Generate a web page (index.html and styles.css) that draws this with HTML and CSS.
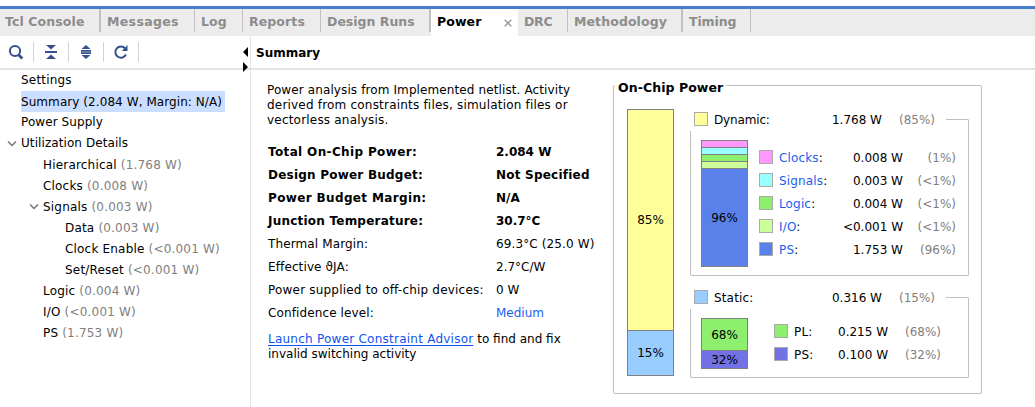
FILE: index.html
```html
<!DOCTYPE html>
<html lang="en">
<head>
<meta charset="utf-8">
<title>Power</title>
<link rel="stylesheet" href="styles.css">
</head>
<body>
<nav class="tabs">
  <div class="tab t-tcl thick"><span>Tcl Console</span></div>
  <div class="tab t-msg"><span>Messages</span></div>
  <div class="tab t-log"><span>Log</span></div>
  <div class="tab t-rep"><span>Reports</span></div>
  <div class="tab t-runs thick"><span>Design Runs</span></div>
  <div class="tab t-power active"><span>Power</span><svg class="close" width="8" height="8" viewBox="0 0 8 8"><path d="M.7.7l6.6 6.6M7.3.7L.7 7.3"/></svg></div>
  <div class="tab t-drc"><span>DRC</span></div>
  <div class="tab t-meth thick"><span>Methodology</span></div>
  <div class="tab t-time"><span>Timing</span></div>
</nav>
<main class="main">
  <aside class="side">
    <div class="toolbar">
      <div class="tool"><svg width="16" height="16" viewBox="0 0 16 16"><circle cx="7" cy="7" r="5.1" fill="none" stroke="#35508a" stroke-width="2"/><path d="M10.5 10.8l3.800 3.600" stroke="#35508a" stroke-width="2.8"/></svg></div>
      <div class="tool"><svg width="16" height="16" viewBox="0 0 16 16" fill="#35508a"><path d="M3 1h10L8 5.500zM2 7h12v2H2zM8 10.500l5 4.500H3z"/></svg></div>
      <div class="tool"><svg width="16" height="16" viewBox="0 0 16 16" fill="#35508a"><path d="M8 1l4.500 4h-9zM3 6h10v1.700H3zM3 8.300h10V10H3zM3.500 11h9L8 15z"/></svg></div>
      <div class="tool"><svg width="16" height="16" viewBox="0 0 16 16"><path d="M13 10.500A5.600 5.600 0 1 1 12.200 4.400" fill="none" stroke="#35508a" stroke-width="2"/><path d="M14.500 1v6H8.800z" fill="#35508a"/></svg></div>
      <div class="collapse"><svg width="6" height="26" viewBox="0 0 6 26"><path d="M5 0v10L0 5zM0 15v10l5-5z"/></svg></div>
    </div>
    <ul class="tree">
      <li class="raised">Settings</li>
      <li><span class="selected">Summary (2.084 W, Margin: N/A)</span></li>
      <li class="branch">Power Supply</li>
      <li class="branch"><svg class="chev" width="10" height="6" viewBox="0 0 10 6"><path d="M1 .5l4 4 4-4"/></svg>Utilization Details</li>
      <li class="l2">Hierarchical <i>(1.768 W)</i></li>
      <li class="l2">Clocks <i>(0.008 W)</i></li>
      <li class="l2"><svg class="chev up" width="10" height="6" viewBox="0 0 10 6"><path d="M1 .5l4 4 4-4"/></svg>Signals <i>(0.003 W)</i></li>
      <li class="l3">Data <i>(0.003 W)</i></li>
      <li class="l3">Clock Enable <i>(&lt;0.001 W)</i></li>
      <li class="l3">Set/Reset <i>(&lt;0.001 W)</i></li>
      <li class="l2">Logic <i>(0.004 W)</i></li>
      <li class="l2">I/O <i>(&lt;0.001 W)</i></li>
      <li class="l2">PS <i>(1.753 W)</i></li>
    </ul>
  </aside>
  <section class="content">
    <h1 class="heading">Summary</h1>
    <div class="columns">
      <div class="report">
        <p class="intro">Power analysis from Implemented netlist. Activity<br><span class="wide">derived from constraints files, simulation files or</span><br><span class="wide">vectorless analysis.</span></p>
        <dl class="facts">
          <dt class="b loose">Total On-Chip Power:</dt><dd class="b tight">2.084 W</dd>
          <dt class="b">Design Power Budget:</dt><dd class="b">Not Specified</dd>
          <dt class="b loose">Power Budget Margin:</dt><dd class="b tight">N/A</dd>
          <dt class="b">Junction Temperature:</dt><dd class="b tight">30.7°C</dd>
          <dt>Thermal Margin:</dt><dd>69.3°C (25.0 W)</dd>
          <dt>Effective ϑJA:</dt><dd class="tight">2.7°C/W</dd>
          <dt class="wide">Power supplied to off-chip devices:</dt><dd class="tight">0 W</dd>
          <dt>Confidence level:</dt><dd class="blue tight">Medium</dd>
        </dl>
        <p class="advice"><a href="#">Launch Power Constraint Advisor</a><span class="tail"> to find and fix<br>invalid switching activity</span></p>
      </div>
      <div class="chip">
        <h2 class="chip-title">On-Chip Power</h2>
        <div class="bar total"><div class="yellow">85%</div><div class="sky">15%</div></div>
        <div class="groups">
          <div class="group dynamic">
            <div class="group-head"><b class="swatch yellow"></b><span class="name tight-name">Dynamic:</span><span class="val">1.768 W</span><span class="pct">(85%)</span><b class="corner"></b></div>
            <div class="group-body">
              <div class="bar dyn"><div class="pink"></div><div class="cyan"></div><div class="green"></div><div class="lime"></div><div class="royal">96%</div></div>
              <div class="legend">
                <div class="item"><b class="swatch pink"></b><span class="name"><em>Clocks</em>:</span><span class="val">0.008 W</span><span class="pct">(1%)</span></div>
                <div class="item"><b class="swatch cyan"></b><span class="name"><em>Signals</em>:</span><span class="val">0.003 W</span><span class="pct">(&lt;1%)</span></div>
                <div class="item"><b class="swatch green"></b><span class="name"><em>Logic</em>:</span><span class="val">0.004 W</span><span class="pct">(&lt;1%)</span></div>
                <div class="item"><b class="swatch lime"></b><span class="name"><em>I/O</em>:</span><span class="val">&lt;0.001 W</span><span class="pct">(&lt;1%)</span></div>
                <div class="item"><b class="swatch royal"></b><span class="name"><em>PS</em>:</span><span class="val">1.753 W</span><span class="pct">(96%)</span></div>
              </div>
            </div>
          </div>
          <div class="group static">
            <div class="group-head"><b class="swatch sky"></b><span class="name">Static:</span><span class="val">0.316 W</span><span class="pct">(15%)</span><b class="corner"></b></div>
            <div class="group-body">
              <div class="bar stat"><div class="green">68%</div><div class="violet">32%</div></div>
              <div class="legend">
                <div class="item"><b class="swatch green"></b><span class="name">PL:</span><span class="val">0.215 W</span><span class="pct">(68%)</span></div>
                <div class="item"><b class="swatch violet"></b><span class="name">PS:</span><span class="val">0.100 W</span><span class="pct">(32%)</span></div>
              </div>
            </div>
          </div>
        </div>
      </div>
    </div>
  </section>
</main>
</body>
</html>
```
FILE: styles.css
```css
* { box-sizing: border-box; margin: 0; padding: 0; }
body { width: 1035px; height: 407px; overflow: hidden; background: #fff; color: #000; font: 12px/15px "DejaVu Sans", sans-serif; display: flex; flex-direction: column; padding-top: 6px; white-space: nowrap; }
svg { display: block; flex: none; }

.tabs { display: flex; height: 30px; border-top: 3px solid #477bcd; background: #ececec; flex: none; }
.tab { height: 23px; border-right: 1px solid #c0c0c0; padding: 5px 0 0 6px; font-weight: bold; color: #8c8c8c; flex: none; font-size: 12.500px; letter-spacing: .1px; }
.thick { border-right-width: 2px; }
.t-tcl { width: 101px; padding-left: 5px; }
.t-msg { width: 94px; letter-spacing: .35px; }
.t-log { width: 48px; }
.t-rep { width: 78px; }
.t-runs { width: 110px; letter-spacing: 0; }
.t-power { width: 87px; }
.t-drc { width: 50px; letter-spacing: -.3px; }
.t-meth { width: 115px; }
.t-time { width: 68px; letter-spacing: -.1px; }
.active { display: flex; height: 27px; border: 0; background: #fff; color: #000; }
.close { margin: 5px 0 0 auto; margin-right: 6px; stroke: #999; stroke-width: 1.400; }

.main { display: flex; flex: 1; }
.side { width: 251px; border-right: 1px solid #e4e4e4; flex: none; }
.toolbar { display: flex; height: 34px; border-bottom: 2px solid #e4e4e4; padding-top: 6px; }
.tool { width: 35px; height: 20px; border-right: 1px solid #d4d4d4; padding: 2px 0 0 9px; }
.tool:first-child { width: 34px; padding-left: 8px; }
.collapse { margin: 5px 0 0 auto; margin-right: 1px; height: 26px; }
.tree { list-style: none; letter-spacing: .19px; }
.tree li { display: flex; align-items: center; height: 21px; padding: 1px 0 0 21px; white-space: pre; }
.tree .raised, .tree .branch { padding: 0 0 1px 21px; }
.tree .branch { letter-spacing: .08px; }
.tree .l2 { padding-left: 43px; }
.tree .l3 { padding-left: 65px; }
.tree i { font-style: normal; color: #808080; }
.chev { margin: 1px 4px 0 -14px; fill: none; stroke: #777; stroke-width: 1.500; }
.chev.up { margin-top: -1px; }
.selected { height: 21px; width: 204px; margin-top: -1px; padding-top: 1px; line-height: 21px; letter-spacing: .07px; background: #cbdeff; }

.content { flex: 1; }
.heading { height: 34px; border-bottom: 2px solid #e4e4e4; padding: 10px 0 0 5px; font-size: 12px; line-height: 15px; }
.columns { display: flex; }
.report { width: 362px; padding: 13px 0 0 16px; }
.intro { letter-spacing: .11px; }
.facts { display: grid; grid-template-columns: 229px 1fr; grid-auto-rows: 23px; line-height: 23px; margin-top: 13px; letter-spacing: .12px; }
.facts dt { padding-left: 1px; }
.b { font-weight: bold; letter-spacing: .22px; }
.loose { letter-spacing: .36px; }
.wide { letter-spacing: .2px; }
.tight { letter-spacing: 0; }
.blue, .name em { color: #1a5cf0; font-style: normal; }
.advice { margin: 7px 0 0 1px; letter-spacing: .24px; }
.advice a { color: #0f52f0; text-underline-offset: 2px; }
.tail { letter-spacing: 0; }

.chip { display: flex; position: relative; width: 369px; height: 309px; margin-top: 15px; border: 1px solid #bebebe; border-radius: 2px; padding: 23px 0 0 13px; }
.chip-title { position: absolute; left: 1px; top: -6px; padding: 0 3px; background: #fff; font-size: 12.500px; line-height: 15px; letter-spacing: .07px; }
.bar { display: flex; flex-direction: column; width: 47px; border: 1px solid #808080; flex: none; }
.bar div { display: flex; align-items: center; justify-content: center; border-bottom: 1px solid #808080; height: 7px; }
.bar div:last-child { flex: 1; border: 0; }
.total { height: 267px; }
.total .yellow { height: 221px; }
.dyn { height: 127px; margin: 9px 0 0 10px; }
.dyn .royal { padding-top: 1px; }
.stat { height: 51px; margin: 9px 0 0 10px; }
.stat .green { height: 32px; padding-top: 1px; }
.stat .violet { padding-top: 1px; }
.groups { width: 279px; margin: -2px 0 0 16px; }
.group-head { display: flex; align-items: center; height: 24px; padding-left: 4px; line-height: 16px; }
.group-head span { padding-top: 2px; }
.group-body { display: flex; border: 1px solid #bebebe; border-top: 0; border-radius: 0 0 2px 2px; }
.dynamic .group-body { height: 145px; }
.static { margin-top: 9px; }
.static .group-body { height: 69px; }
.swatch { width: 14px; height: 14px; border: 1px solid #aaa; flex: none; }
.name { padding-left: 6px; letter-spacing: .15px; }
.tight-name { letter-spacing: -.15px; }
.val { text-align: right; flex: none; }
.pct { text-align: right; color: #808080; }
.group-head .name { width: 86px; }
.group-head .val { width: 88px; }
.group-head .pct { width: 53px; }
.corner { width: 23px; height: 12px; margin-left: auto; align-self: flex-end; border-top: 1px solid #bebebe; border-right: 1px solid #bebebe; border-radius: 0 2px 0 0; }
.legend { padding: 15px 0 0 11px; }
.item { display: flex; align-items: flex-start; height: 23px; line-height: 17px; padding-top: 4px; }
.item .name { width: 60px; }
.item .val { width: 70px; }
.item .pct { width: 53px; }
.static .legend { padding: 11px 0 0 26px; }
.static .item .name { width: 50px; }
.static .item .val { width: 50px; }

.yellow { background: #ffff99; }
.sky { background: #99ccff; }
.pink { background: #ff99ff; }
.cyan { background: #99ffff; }
.green { background: #8cf06e; }
.lime { background: #ccff99; }
.royal { background: #5a80ea; }
.violet { background: #7272e5; }
```
